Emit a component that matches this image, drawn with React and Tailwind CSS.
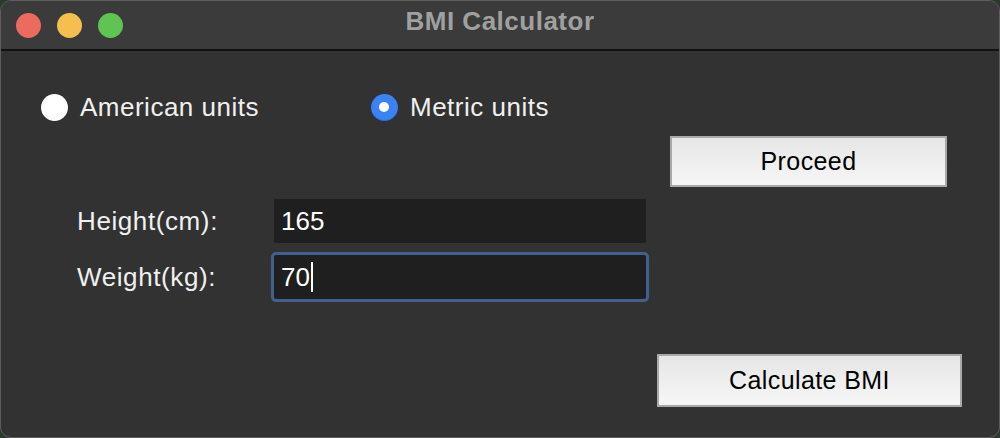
import React from 'react';

function Radio({ checked, label }) {
  return (
    <label className="flex items-center gap-[12px]">
      {checked ? (
        <span className="w-[27px] h-[27px] rounded-full bg-[#3a82f6] flex items-center justify-center shadow-[inset_0_-1px_0_rgba(0,0,0,0.15)]">
          <span className="w-[10px] h-[10px] rounded-full bg-white" />
        </span>
      ) : (
        <span className="w-[27px] h-[27px] rounded-full bg-white shadow-[0_0_1px_rgba(0,0,0,0.5)]" />
      )}
      <span className="text-[26px] leading-[30px] text-[#f0f0f0] tracking-[0.5px]">{label}</span>
    </label>
  );
}

function MacButton({ children, className }) {
  return (
    <button
      className={
        'border-2 border-[#a9a9a9] bg-gradient-to-b from-[#e6e6e6] to-[#f6f6f6] text-[25px] text-black tracking-[0.4px] ' +
        className
      }
    >
      {children}
    </button>
  );
}

export default function App() {
  return (
    <div className="w-[1000px] h-[438px] bg-[#2c3a2c] font-['Liberation_Sans',Arial,sans-serif]">
      <div className="w-full h-full rounded-[11px] border border-[#5e5e5e] overflow-hidden flex flex-col bg-[#323232]">
        {/* title bar */}
        <div className="relative h-[50px] shrink-0 bg-[#3b3b3b] border-b-2 border-[#111] flex items-center">
          <div className="flex gap-[16px] pl-[15px]">
            <span className="w-[25px] h-[25px] rounded-full bg-[#ec6a5e]" />
            <span className="w-[25px] h-[25px] rounded-full bg-[#f4bf4f]" />
            <span className="w-[25px] h-[25px] rounded-full bg-[#5fc454]" />
          </div>
          <div className="absolute inset-0 flex items-center justify-center text-[26px] font-bold text-[#a0a0a0] tracking-[0.5px] pb-[7px]">
            BMI Calculator
          </div>
        </div>

        {/* body */}
        <div className="flex-1 flex flex-col">
          <div className="flex items-center pl-[40px] mt-[41px] gap-[112px]">
            <Radio label="American units" />
            <Radio checked label="Metric units" />
          </div>

          <div className="flex justify-end pr-[52px] mt-[14px]">
            <MacButton className="w-[277px] h-[51px]">Proceed</MacButton>
          </div>

          <div className="flex flex-col gap-[12px] mt-[12px] pl-[76px]">
            <div className="flex items-center">
              <span className="w-[197px] text-[26px] text-[#f0f0f0] tracking-[0.6px]">Height(cm):</span>
              <div className="w-[372px] h-[44px] bg-[#1f1f1f] flex items-center pl-[7px] text-[26px] text-white">165</div>
            </div>
            <div className="flex items-center">
              <span className="w-[197px] text-[26px] text-[#f0f0f0] tracking-[0.6px]">Weight(kg):</span>
              <div className="w-[372px] h-[44px] bg-[#1f1f1f] flex items-center pl-[7px] text-[26px] text-white ring-[3px] ring-[#41608c] rounded-[2px]">
                70<span className="w-[2px] h-[30px] bg-white ml-[1px]" />
              </div>
            </div>
          </div>

          <div className="flex justify-end pr-[37px] mt-[55px]">
            <MacButton className="w-[305px] h-[53px]">Calculate BMI</MacButton>
          </div>
        </div>
      </div>
    </div>
  );
}
